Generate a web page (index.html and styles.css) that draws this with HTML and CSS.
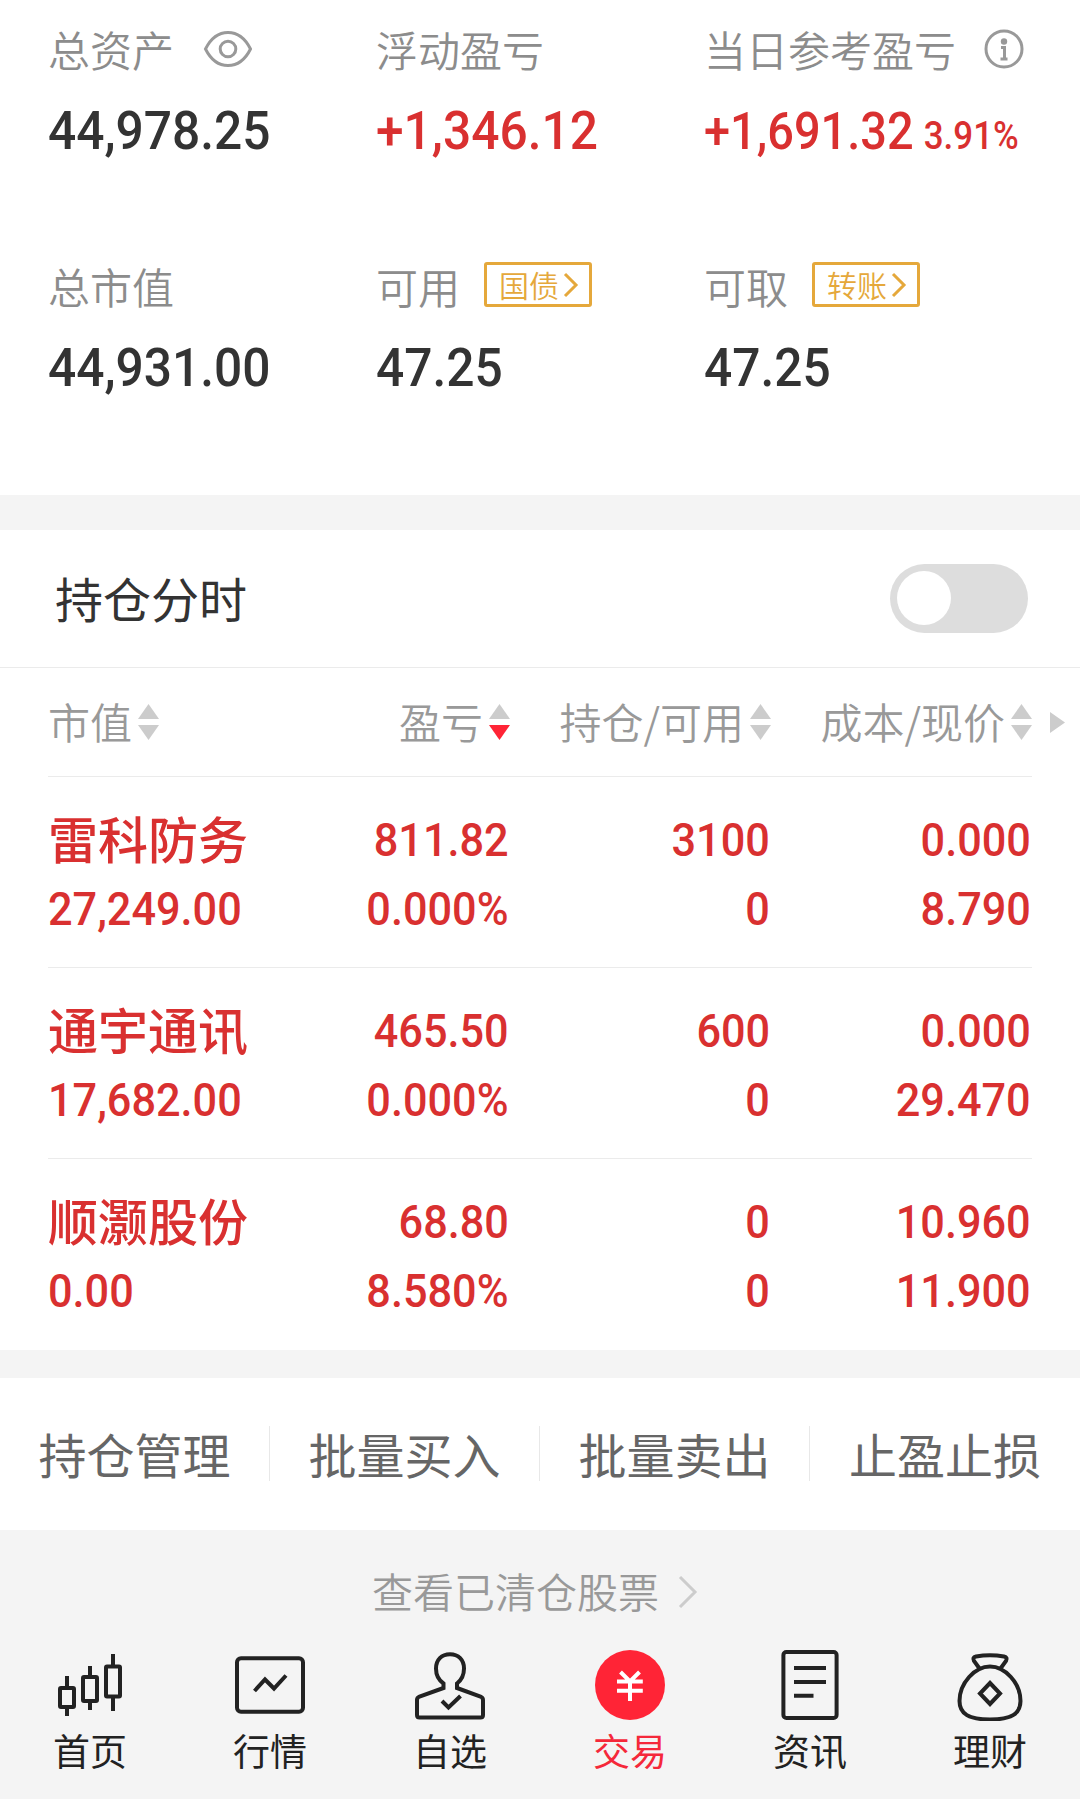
FILE: index.html
```html
<!DOCTYPE html>
<html lang="zh-CN">
<head>
    <meta charset="UTF-8">
    <meta name="viewport" content="width=device-width, initial-scale=1.0">
    <title>交易</title>
    <link rel="stylesheet" href="styles.css">
</head>
<body>

    <!-- Account summary -->
    <section class="summary">
        <div class="summary-item">
            <div class="summary-label">总资产
                <svg class="icon-eye" viewBox="0 0 50 38"><path d="M2.5 19C8 8 15.500 2.500 25 2.500S42 8 47.500 19C42 30 34.500 35.500 25 35.500S8 30 2.500 19Z"/><circle cx="25" cy="19" r="7.800"/></svg>
            </div>
            <div class="summary-value">44,978.25</div>
        </div>
        <div class="summary-item">
            <div class="summary-label">浮动盈亏</div>
            <div class="summary-value up">+1,346.12</div>
        </div>
        <div class="summary-item">
            <div class="summary-label">当日参考盈亏
                <svg class="icon-info" viewBox="0 0 40 40"><circle cx="20" cy="20" r="18"/><circle class="dot" cx="20" cy="12.500" r="3.200"/><path d="M17 18.500H20.500V30M16.500 30H23.500"/></svg>
            </div>
            <div class="summary-value up small">+1,691.32<span class="percent">3.91%</span></div>
        </div>
        <div class="summary-item">
            <div class="summary-label">总市值</div>
            <div class="summary-value">44,931.00</div>
        </div>
        <div class="summary-item">
            <div class="summary-label">可用
                <a class="badge">国债<svg viewBox="0 0 16 26"><path d="M2 2L13 13L2 24"/></svg></a>
            </div>
            <div class="summary-value">47.25</div>
        </div>
        <div class="summary-item">
            <div class="summary-label">可取
                <a class="badge">转账<svg viewBox="0 0 16 26"><path d="M2 2L13 13L2 24"/></svg></a>
            </div>
            <div class="summary-value">47.25</div>
        </div>
    </section>

    <!-- Intraday switch -->
    <section class="switch-row">
        <span>持仓分时</span>
        <div class="toggle"><div class="knob"></div></div>
    </section>

    <!-- Positions -->
    <section class="positions">
        <div class="head-line">
            <div class="row head">
                <div class="th">市值<span class="sort"><i class="tri-up"></i><i class="tri-down"></i></span></div>
                <div class="th">盈亏<span class="sort"><i class="tri-up"></i><i class="tri-down active"></i></span></div>
                <div class="th">持仓/可用<span class="sort"><i class="tri-up"></i><i class="tri-down"></i></span></div>
                <div class="th">成本/现价<span class="sort"><i class="tri-up"></i><i class="tri-down"></i></span></div>
            </div>
            <i class="tri-right"></i>
        </div>
        <div class="row">
            <div class="cell"><b class="name">雷科防务</b><span>27,249.00</span></div>
            <div class="cell"><span>811.82</span><span>0.000%</span></div>
            <div class="cell"><span>3100</span><span>0</span></div>
            <div class="cell"><span>0.000</span><span>8.790</span></div>
        </div>
        <div class="row">
            <div class="cell"><b class="name">通宇通讯</b><span>17,682.00</span></div>
            <div class="cell"><span>465.50</span><span>0.000%</span></div>
            <div class="cell"><span>600</span><span>0</span></div>
            <div class="cell"><span>0.000</span><span>29.470</span></div>
        </div>
        <div class="row">
            <div class="cell"><b class="name">顺灏股份</b><span>0.00</span></div>
            <div class="cell"><span>68.80</span><span>8.580%</span></div>
            <div class="cell"><span>0</span><span>0</span></div>
            <div class="cell"><span>10.960</span><span>11.900</span></div>
        </div>
    </section>

    <section class="actions">
        <div class="action">持仓管理</div>
        <div class="action">批量买入</div>
        <div class="action">批量卖出</div>
        <div class="action">止盈止损</div>
    </section>

    <a class="cleared"><span>查看已清仓股票</span><svg viewBox="0 0 20 34"><path d="M2 2L17 17L2 32"/></svg></a>

    <!-- Bottom tabs -->
    <nav class="tabs">
        <div class="tab">
            <svg viewBox="0 0 72 72"><rect x="6" y="39" width="14" height="19" rx="1"/><rect x="29" y="28" width="14" height="24" rx="1"/><rect x="52" y="17.500" width="14" height="30" rx="1"/><path d="M13 27V39M13 58V67M36 17V28M36 52V61M59 5V17M59 48V62"/></svg>
            <span>首页</span>
        </div>
        <div class="tab">
            <svg viewBox="0 0 72 72"><rect x="3" y="9.300" width="66" height="53.400" rx="4"/><path d="M20.500 42L31 30.500L40 39.500L52 26.500"/></svg>
            <span>行情</span>
        </div>
        <div class="tab">
            <svg viewBox="0 0 72 72"><path d="M29.500 39V34.500C24.500 31 22 26.500 22 19.500C22 11 27.500 5.300 36 5.300S50 11 50 19.500C50 26.500 47.500 31 43 34.500V39L66.500 47.500Q69 48.500 69 51V66Q69 68.500 66.500 68.500H5.500Q3 68.500 3 66V51Q3 48.500 5.500 47.500Z"/><path d="M28 52L34.500 58.500L46.500 47"/></svg>
            <span>自选</span>
        </div>
        <div class="tab active">
            <svg viewBox="0 0 72 72"><circle class="coin" cx="36" cy="36" r="35"/><path class="yen" d="M26.500 23L36 32.500L45.500 23M23 32.500H48.800M23 41.700H48.800M36 32V52"/></svg>
            <span>交易</span>
        </div>
        <div class="tab">
            <svg viewBox="0 0 72 72"><rect x="9.400" y="3" width="53.200" height="66" rx="3"/><path d="M20 19H52M20 33H52M20 46.700H39.500"/></svg>
            <span>资讯</span>
        </div>
        <div class="tab">
            <svg viewBox="0 0 72 72"><path d="M36 17.500C21 17.500 5.500 34 5.500 52C5.500 65 15 70.500 36 70.500S66.500 65 66.500 52C66.500 34 51 17.500 36 17.500Z"/><path d="M25.500 19.500L20 12Q18 8.500 22 7.500Q36 5 50 7.500Q54 8.500 52 12L46.500 19.500M36 34L46 44.500L36 55L26 44.500Z"/></svg>
            <span>理财</span>
        </div>
    </nav>

</body>
</html>
```
FILE: styles.css
```css
* {
    box-sizing: border-box;
}

body {
    margin: 0;
    width: 1080px;
    height: 1799px;
    overflow: hidden;
    background-color: #f4f4f4;
    color: #333;
    font-family: "Noto Sans CJK SC", sans-serif;
}

svg {
    fill: none;
    stroke: #999;
    stroke-width: 3;
    flex-shrink: 0;
}

i {
    display: block;
}

/* Account summary */
.summary {
    height: 495px;
    padding: 19px 0 0 48px;
    background-color: #fff;
    display: grid;
    grid-template-columns: repeat(3, 328px);
    grid-auto-rows: 141px;
    row-gap: 96px;
}

.summary-label {
    display: flex;
    align-items: center;
    height: 60px;
    font-size: 42px;
    line-height: 60px;
    color: #8c8c8c;
    white-space: nowrap;
    font-weight: 350;
}

/* Digits are set slightly condensed */
.summary-value {
    margin-top: 22px;
    height: 60px;
    font-family: Roboto, sans-serif;
    font-size: 54px;
    font-weight: 500;
    line-height: 60px;
    white-space: nowrap;
    transform: scaleX(0.92);
    transform-origin: left;
}

.summary-value.small {
    margin-top: 23px;
    font-size: 51px;
}

.percent {
    margin-left: 11px;
    font-size: 38px;
    line-height: 1;
}

.up {
    color: #d93030;
}

.icon-eye {
    width: 50px;
    height: 38px;
    margin-left: 29px;
}

.icon-info {
    width: 40px;
    height: 40px;
    margin-left: 28px;
}

.icon-info .dot {
    fill: #999;
    stroke: none;
}

.badge {
    display: flex;
    align-items: center;
    width: 108px;
    height: 45px;
    margin: 0 0 3px 24px;
    padding-left: 12px;
    border: 3px solid #e5a83b;
    border-radius: 3px;
    color: #e5a83b;
    font-size: 30px;
    line-height: 37px;
}

.badge svg {
    width: 16px;
    height: 26px;
    margin-left: 4px;
    stroke: #e5a83b;
}

/* Intraday switch */
.switch-row {
    margin-top: 35px;
    height: 138px;
    padding: 0 52px 0 55px;
    display: flex;
    justify-content: space-between;
    align-items: center;
    background-color: #fff;
    border-bottom: 1px solid #ebebeb;
    font-size: 48px;
}

.switch-row span {
    padding-bottom: 3px;
}

.toggle {
    width: 138px;
    height: 69px;
    padding: 7px;
    border-radius: 35px;
    background-color: #ddd;
}

.knob {
    width: 54px;
    height: 54px;
    border-radius: 50%;
    background-color: #fff;
}

/* Positions */
.positions {
    height: 682px;
    padding-left: 48px;
    background-color: #fff;
}

.head-line {
    display: flex;
    align-items: center;
}

.row {
    display: grid;
    grid-template-columns: 201px 261px 261px 261px;
    width: 984px;
    height: 191px;
    border-bottom: 1px solid #ebebeb;
}

.row.head {
    height: 109px;
}

.row:last-child {
    border-bottom: none;
}

.th {
    display: flex;
    align-items: center;
    justify-content: flex-end;
    padding-bottom: 3px;
    font-size: 42px;
    font-weight: 350;
    color: #999;
    white-space: nowrap;
}

.th:first-child {
    justify-content: flex-start;
}

.sort {
    display: flex;
    flex-direction: column;
    gap: 6px;
    margin: 3px 0 0 6px;
}

.tri-up,
.tri-down {
    width: 21px;
    height: 15px;
    background-color: #ccc;
    clip-path: polygon(50% 0, 100% 100%, 0 100%);
}

.tri-down {
    clip-path: polygon(0 0, 100% 0, 50% 100%);
}

.tri-down.active {
    background-color: #ff2436;
}

.tri-right {
    width: 15px;
    height: 21px;
    margin-left: 18px;
    background-color: #ccc;
    clip-path: polygon(0 0, 100% 50%, 0 100%);
}

.cell {
    display: flex;
    flex-direction: column;
    align-items: flex-end;
    padding: 28px 1px 0 0;
    color: #d93030;
    font-family: Roboto, sans-serif;
    font-size: 47px;
    font-weight: 500;
    line-height: 69px;
    white-space: nowrap;
}

.cell span {
    transform: scaleX(0.92);
    transform-origin: right;
}

.cell:first-child {
    align-items: flex-start;
}

.cell:first-child span {
    transform-origin: left;
}

.name {
    margin-bottom: 4px;
    font-family: "Noto Sans CJK SC", sans-serif;
    font-size: 50px;
    font-weight: 500;
    line-height: 65px;
}

/* Actions */
.actions {
    display: grid;
    grid-template-columns: repeat(4, 1fr);
    height: 152px;
    margin-top: 28px;
    padding: 48px 0 49px;
    background-color: #fff;
}

.action {
    border-right: 1px solid #e8e8e8;
    text-align: center;
    font-size: 48px;
    line-height: 54px;
    color: #666;
}

.action:last-child {
    border-right: none;
}

.cleared {
    display: flex;
    justify-content: center;
    align-items: center;
    height: 119px;
    padding: 4px 10px 0 0;
    font-size: 41px;
    font-weight: 350;
    color: #999;
}

.cleared span {
    padding-bottom: 4px;
}

.cleared svg {
    width: 20px;
    height: 34px;
    margin-left: 19px;
    stroke: #ccc;
}

/* Bottom tabs */
.tabs {
    display: grid;
    grid-template-columns: repeat(6, 180px);
}

.tab {
    display: flex;
    flex-direction: column;
    align-items: center;
    gap: 2px;
    font-size: 37px;
    line-height: 54px;
    color: #222;
}

.tab svg {
    width: 72px;
    height: 72px;
    stroke: #222;
    stroke-width: 4;
}

.tab.active {
    color: #f5283a;
}

.tab .coin {
    fill: #ff2436;
    stroke: none;
}

.tab .yen {
    stroke: #fff;
}
```
